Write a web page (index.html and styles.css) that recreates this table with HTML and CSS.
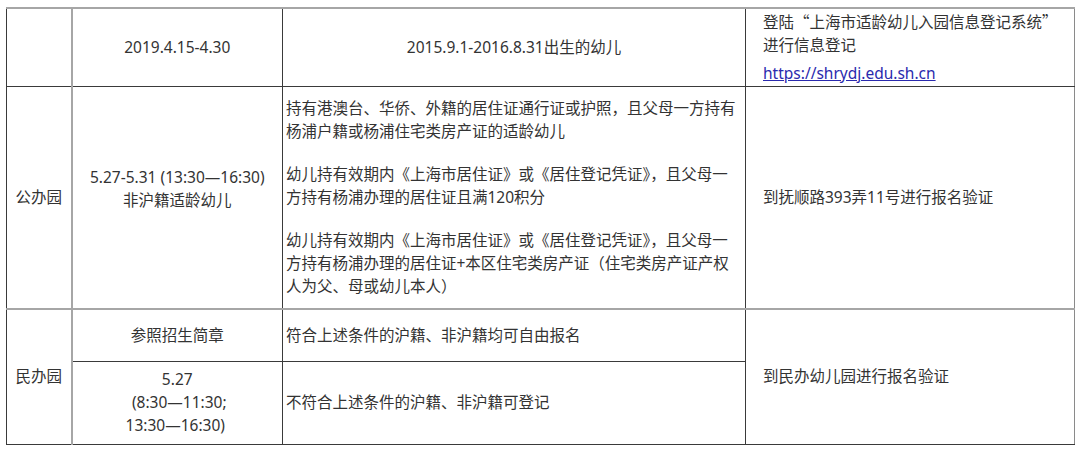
FILE: index.html
```html
<!DOCTYPE html>
<html lang="zh-CN">
<head>
<meta charset="utf-8">
<title>入园登记</title>
<link rel="stylesheet" href="styles.css">
</head>
<body>
<div class="wrap">
<table class="grid">
  <colgroup>
    <col class="w1"><col class="w2"><col class="w3"><col class="w4">
  </colgroup>
  <tr class="r1">
    <td class="c1"></td>
    <td class="center">2019.4.15-4.30</td>
    <td class="center">2015.9.1-2016.8.31出生的幼儿</td>
    <td class="right">
      <div>登陆<span class="cjk">“</span>上海市适龄幼儿入园信息登记系统<span class="cjk">”</span></div>
      <div>进行信息登记</div>
      <div class="linkline"><a href="#">https://shrydj.edu.sh.cn</a></div>
    </td>
  </tr>
  <tr class="r2">
    <td class="c1 center">公办园</td>
    <td class="center"><div class="lift">5.27-5.31 (13:30—16:30)<br>非沪籍适龄幼儿</div></td>
    <td class="left">
      <p>持有港澳台、华侨、外籍的居住证通行证或护照，且父母一方持有<br>杨浦户籍或杨浦住宅类房产证的适龄幼儿</p>
      <p>幼儿持有效期内《上海市居住证》或《居住登记凭证》，且父母一<br>方持有杨浦办理的居住证且满120积分</p>
      <p>幼儿持有效期内《上海市居住证》或《居住登记凭证》，且父母一<br>方持有杨浦办理的居住证+本区住宅类房产证（住宅类房产证产权<br>人为父、母或幼儿本人）</p>
    </td>
    <td class="right">到抚顺路393弄11号进行报名验证</td>
  </tr>
  <tr class="r3">
    <td class="c1 center" rowspan="2">民办园</td>
    <td class="center">参照招生简章</td>
    <td class="left">符合上述条件的沪籍、非沪籍均可自由报名</td>
    <td class="right" rowspan="2">到民办幼儿园进行报名验证</td>
  </tr>
  <tr class="r4">
    <td class="center">5.27<br>&nbsp;(8:30—11:30;<br>13:30—16:30)&nbsp;</td>
    <td class="left">不符合上述条件的沪籍、非沪籍可登记</td>
  </tr>
</table>
</div>
</body>
</html>
```

FILE: styles.css
```css
html, body {
  margin: 0;
  padding: 0;
  background: #ffffff;
}
body {
  font-family: "Noto Sans", "Noto Sans CJK SC", sans-serif;
  font-size: 15.5px;
  color: #333333;
}
.cjk {
  font-family: "Noto Sans CJK SC", sans-serif;
}
.wrap {
  padding: 7px 0 0 6px;
}
.grid {
  border-collapse: collapse;
  table-layout: fixed;
  width: 1068px;
}
.w1 { width: 65px; }
.w2 { width: 211px; }
.w3 { width: 463px; }
.w4 { width: 329px; }
.grid td {
  border: 1px solid #3a3a3a;
  padding: 0;
  vertical-align: middle;
  line-height: 23px;
  white-space: nowrap;
}
.grid td:last-child {
  border-right: 1px solid #8a8a8a;
}
.r1 td {
  border-top: 2px solid #a6a6a6;
}
.r3 td {
  border-top: 2px solid #a6a6a6;
}
.grid td.c1 {
  border-right: 2px solid #a6a6a6;
}
.r1 { height: 78px; }
.r2 { height: 223px; }
.r3 { height: 52px; }
.r4 { height: 83px; }
.center { text-align: center; }
.grid td.left { padding-left: 3px; }
.grid td.right { padding-left: 17px; }
.left p {
  margin: 0;
}
.left p + p {
  margin-top: 20px;
}
.lift {
  padding-bottom: 16px;
}
.linkline {
  margin-top: 5px;
}
.linkline a {
  color: #2a2aae;
  text-decoration: underline;
}
```
